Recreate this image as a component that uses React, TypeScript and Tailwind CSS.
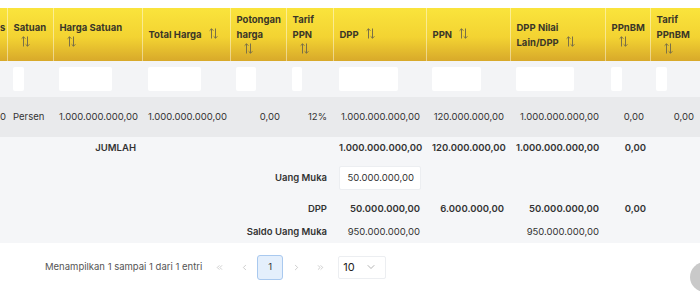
import React from 'react';
import { ChevronDown, ChevronLeft, ChevronRight, ChevronsLeft, ChevronsRight } from 'lucide-react';

interface IHeaderCol {
  lines: string[];
  iconInline?: boolean;
  noIcon?: boolean;
}

const widths = [7, 46, 89, 88, 56, 47, 93, 84, 95, 45, 50];

const headers: IHeaderCol[] = [
  { lines: ['s'], noIcon: true },
  { lines: ['Satuan'] },
  { lines: ['Harga Satuan'] },
  { lines: ['Total Harga'], iconInline: true },
  { lines: ['Potongan', 'harga'] },
  { lines: ['Tarif', 'PPN'] },
  { lines: ['DPP'], iconInline: true },
  { lines: ['PPN'], iconInline: true },
  { lines: ['DPP Nilai', 'Lain/DPP'], iconInline: true },
  { lines: ['PPnBM'] },
  { lines: ['Tarif', 'PPnBM'] },
];

// filter input widths per column (0 = none)
const filterWidths = [0, 11, 53, 53, 20, 10, 59, 49, 58, 11, 11];

const row = ['0', 'Persen', '1.000.000.000,00', '1.000.000.000,00', '0,00', '12%', '1.000.000.000,00', '120.000.000,00', '1.000.000.000,00', '0,00', '0,00'];

const SortIcon = () => (
  <svg width="9" height="11" viewBox="0 0 9 11" fill="none" stroke="#7a7048" strokeWidth="1" className="inline-block ml-[7px] align-[-1px]">
    <path d="M2.5 10.5V0.8M0.6 2.7L2.5 0.8L4.4 2.7" />
    <path d="M6.5 0.5V10.2M4.6 8.3L6.5 10.2L8.4 8.3" />
  </svg>
);

const App = () => {
  return (
    <div className="relative w-[700px] h-[291px] overflow-hidden bg-white font-['Inter',sans-serif] text-[#333]">
      <div className="h-[8px]" />
      <table className="table-fixed border-collapse w-[700px] text-[9.5px]">
        <colgroup>
          {widths.map((w, i) => (
            <col key={i} style={{ width: w }} />
          ))}
        </colgroup>
        <thead>
          <tr className="h-[53px] bg-[linear-gradient(180deg,#fae43c_0%,#f3d332_55%,#d8a92a_100%)]">
            {headers.map((h, i) => (
              <th
                key={i}
                className={`${i === 0 ? 'pl-0' : 'pl-1.5'} pr-1 text-left align-middle font-bold leading-[15px] text-[#3a3628] ${i < headers.length - 1 ? 'border-r border-white/45' : ''}`}
              >
                {h.lines.map((l, j) => (
                  <div key={j} className="whitespace-nowrap">
                    {l}
                    {h.iconInline && j === h.lines.length - 1 && <SortIcon />}
                  </div>
                ))}
                {!h.iconInline && !h.noIcon && (
                  <div className="leading-[15px]">
                    <SortIcon />
                  </div>
                )}
                {h.noIcon && <div className="h-[15px]" />}
              </th>
            ))}
          </tr>
        </thead>
        <tbody>
          <tr className="h-[36px] bg-[#f3f4f6]">
            {filterWidths.map((w, i) => (
              <td key={i} className="pl-1.5 align-middle">
                {w > 0 && <div className="h-[24px] bg-white rounded-[2px]" style={{ width: w }} />}
              </td>
            ))}
          </tr>
          <tr className="h-[40px] bg-[#e9eaec]">
            {row.map((v, i) => (
              <td
                key={i}
                className={`whitespace-nowrap align-middle ${i === 0 ? 'pl-0 text-left' : i === 1 ? 'pl-1.5 text-left' : 'px-1.5 text-right'}`}
              >
                {v}
              </td>
            ))}
          </tr>
          <tr className="h-[22px] bg-[#f5f6f8] font-semibold">
            <td colSpan={3} className="pr-1.5 text-right">JUMLAH</td>
            <td colSpan={3} />
            <td className="px-1.5 text-right whitespace-nowrap">1.000.000.000,00</td>
            <td className="px-1.5 text-right whitespace-nowrap">120.000.000,00</td>
            <td className="px-1.5 text-right whitespace-nowrap">1.000.000.000,00</td>
            <td className="pl-1.5 pr-1 text-right">0,00</td>
            <td />
          </tr>
          <tr className="h-[38px] bg-[#f5f6f8]">
            <td colSpan={6} className="pr-1.5 text-right font-semibold">Uang Muka</td>
            <td className="pl-1.5">
              <div className="h-[24px] w-[82px] bg-white border border-[#eceef1] rounded-[2px] flex items-center justify-end pr-1.5">
                50.000.000,00
              </div>
            </td>
            <td colSpan={4} />
          </tr>
          <tr className="h-[24px] bg-[#f5f6f8] font-semibold">
            <td colSpan={6} className="pr-1.5 text-right">DPP</td>
            <td className="px-1.5 text-right">50.000.000,00</td>
            <td className="px-1.5 text-right">6.000.000,00</td>
            <td className="px-1.5 text-right">50.000.000,00</td>
            <td className="pl-1.5 pr-1 text-right">0,00</td>
            <td />
          </tr>
          <tr className="h-[22px] bg-[#f5f6f8]">
            <td colSpan={6} className="pr-1.5 text-right font-semibold">Saldo Uang Muka</td>
            <td className="px-1.5 text-right">950.000.000,00</td>
            <td />
            <td className="px-1.5 text-right">950.000.000,00</td>
            <td colSpan={2} />
          </tr>
        </tbody>
      </table>
      <div className="h-[48px] flex items-center pl-[45px] text-[9.5px] text-[#555]">
        <span>Menampilkan 1 sampai 1 dari 1 entri</span>
        <div className="flex items-center ml-[13px] text-[#aaa]">
          <ChevronsLeft size={9} strokeWidth={1.5} />
          <ChevronLeft size={9} strokeWidth={1.5} className="ml-[16px]" />
          <div className="ml-[8px] w-[26px] h-[25px] flex items-center justify-center rounded-[3px] bg-[#e4effc] border border-[#a9c9ef] text-[#333]">
            1
          </div>
          <ChevronRight size={9} strokeWidth={1.5} className="ml-[9px]" />
          <ChevronsRight size={9} strokeWidth={1.5} className="ml-[15px]" />
        </div>
        <div className="ml-[13px] w-[48px] h-[23px] flex items-center justify-between pl-1 pr-2 bg-white border border-[#eceef1] rounded-[2px] text-[11px] text-[#222]">
          <span>10</span>
          <ChevronDown size={12} strokeWidth={1.5} className="text-[#999]" />
        </div>
      </div>
      <div className="absolute left-[690px] top-[262px] w-[30px] h-[30px] rounded-full bg-[#c9c9c9]" />
    </div>
  );
};

export default App;
